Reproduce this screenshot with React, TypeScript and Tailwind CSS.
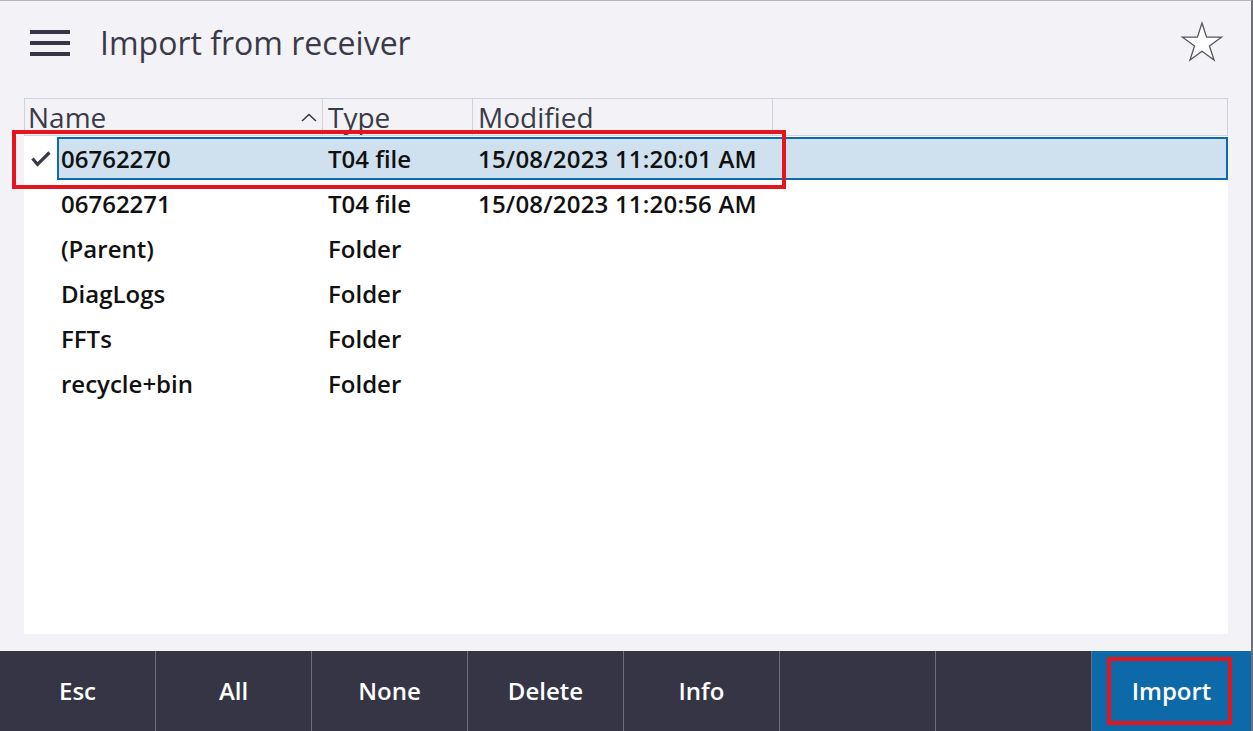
import React from "react";

const rows = [
  { name: "06762270", type: "T04 file", mod: "15/08/2023 11:20:01 AM", sel: true },
  { name: "06762271", type: "T04 file", mod: "15/08/2023 11:20:56 AM" },
  { name: "(Parent)", type: "Folder", mod: "" },
  { name: "DiagLogs", type: "Folder", mod: "" },
  { name: "FFTs", type: "Folder", mod: "" },
  { name: "recycle+bin", type: "Folder", mod: "" },
];

const buttons = ["Esc", "All", "None", "Delete", "Info", "", ""];

export default function App() {
  return (
    <div
      className="relative w-[1253px] h-[731px] flex flex-col bg-[#f2f2f7] border-t border-t-[#b4b4bc] border-r-2 border-r-[#6e6e74] overflow-hidden"
      style={{ fontFamily: '"Open Sans", "Noto Sans", sans-serif' }}
    >
      {/* Header */}
      <div className="h-[84px] flex items-center pl-[30px] pr-[27px] shrink-0">
        <div className="w-[40px] flex flex-col gap-[7px]">
          <div className="h-[4px] bg-[#363545]" />
          <div className="h-[4px] bg-[#363545]" />
          <div className="h-[4px] bg-[#363545]" />
        </div>
        <div className="ml-[30px] text-[32px] text-[#3a3a48] leading-[40px]">Import from receiver</div>
        <div className="flex-1" />
        <svg width="44" height="44" viewBox="0 0 44 44">
          <polygon
            points="22,2 26.6,16.17 41.5,16.17 29.45,24.92 34.05,39.08 22,30.33 9.95,39.08 14.55,24.92 2.5,16.17 17.4,16.17"
            fill="#ffffff"
            stroke="#55555c"
            strokeWidth="1.3"
            strokeLinejoin="miter"
          />
        </svg>
      </div>

      {/* Table */}
      <div className="mt-[13px] ml-[24px] w-[1204px] h-[536px] bg-white shrink-0 flex flex-col">
        <div className="h-[38px] flex bg-[#f2f2f7] border border-[#d2d2da] text-[28px] text-[#3a3a48] leading-[34px]">
          <div className="w-[298px] border-r border-[#d2d2da] pl-[3px] pt-[1px] flex relative">
            <span>Name</span>
            <svg className="absolute left-[276px] top-[14px]" width="16" height="9" viewBox="0 0 16 9">
              <polyline points="1,8 8,1.5 15,8" fill="none" stroke="#3a3a48" strokeWidth="1.6" />
            </svg>
          </div>
          <div className="w-[150px] border-r border-[#d2d2da] pl-[5px] pt-[1px]">Type</div>
          <div className="w-[300px] border-r border-[#d2d2da] pl-[5px] pt-[1px]">Modified</div>
          <div className="flex-1" />
        </div>
        {rows.map((r, i) => (
          <div key={i} className="h-[45px] flex text-[24px] font-semibold text-[#111111]">
            <div className="w-[33px] flex items-center justify-center">
              {r.sel && (
                <svg width="20" height="16" viewBox="0 0 20 16">
                  <polyline points="1.5,7.5 6.5,13.5 18.5,1.5" fill="none" stroke="#3a3a48" strokeWidth="3.2" />
                </svg>
              )}
            </div>
            <div
              className={
                r.sel
                  ? "flex-1 flex items-center bg-[#cfe1ee] border-2 border-[#0f6aab] my-[1px]"
                  : "flex-1 flex items-center border-2 border-transparent my-[1px]"
              }
            >
              <div className="w-[264px] pl-[2px]">{r.name}</div>
              <div className="w-[150px] pl-[5px]">{r.type}</div>
              <div className="pl-[5px] tracking-[0.2px]">{r.mod}</div>
            </div>
          </div>
        ))}
      </div>

      <div className="flex-1" />

      {/* Bottom bar */}
      <div className="h-[80px] flex bg-[#363545] shrink-0 text-white text-[24px] font-semibold">
        {buttons.map((b, i) => (
          <div key={i} className="w-[156px] border-r border-[#6e6d7c] flex items-center justify-center">
            {b}
          </div>
        ))}
        <div className="flex-1 bg-[#0d69a8] relative flex items-center justify-center">
          Import
          <div className="absolute left-[15px] right-[19px] top-[6px] bottom-[6px] border-[4px] border-[#e3151f]" />
        </div>
      </div>

      {/* Annotation box */}
      <div className="absolute left-[12px] top-[129px] w-[774px] h-[59px] border-[4px] border-[#e3151f]" />
    </div>
  );
}
